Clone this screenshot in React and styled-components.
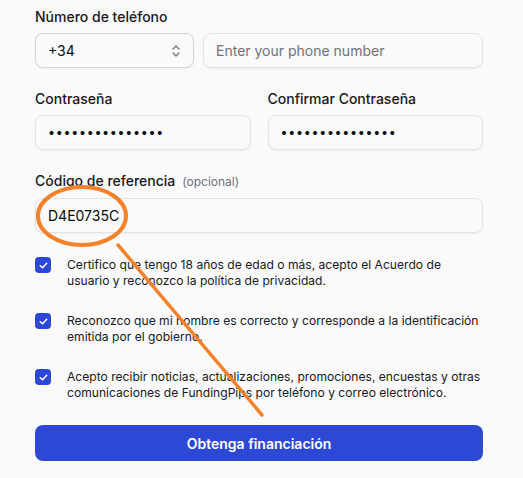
import React from 'react';
import styled, { createGlobalStyle } from 'styled-components';

const GlobalStyle = createGlobalStyle`
  html, body {
    margin: 0;
    padding: 0;
    background: #fafafa;
  }
  body {
    font-family: Inter, "Noto Sans", sans-serif;
    color: #18181b;
  }
`;

const Page = styled.div`
  position: relative;
  width: 523px;
  height: 478px;
  overflow: hidden;
  background: #fafafa;
`;

const Form = styled.form`
  display: flex;
  flex-direction: column;
  gap: 21px;
  width: 448px;
  padding: 7px 0 0 35px;
`;

const Field = styled.div`
  display: flex;
  flex-direction: column;
  gap: 6px;
  min-width: 0;
`;

const Row = styled.div`
  display: grid;
  grid-template-columns: ${({ $cols }) => $cols || '1fr 1fr'};
  gap: ${({ $gap }) => $gap || '17px'};
`;

const Label = styled.label`
  font-size: 14px;
  line-height: 20px;
  font-weight: 500;
  color: #18181b;
`;

const Hint = styled.span`
  font-size: 12px;
  font-weight: 400;
  color: #71717a;
  margin-left: 7px;
`;

const Input = styled.div`
  height: 35px;
  box-sizing: border-box;
  border: 1px solid ${({ $strong }) => ($strong ? '#d4d4d8' : '#e4e4e7')};
  border-radius: 8px;
  background: #fafafa;
  display: flex;
  align-items: center;
  justify-content: space-between;
  padding: 0 12px;
  font-size: ${({ $dots }) => ($dots ? '12.5px' : '14px')};
  letter-spacing: ${({ $dots }) => ($dots ? '0.7px' : '0')};
  color: ${({ $placeholder }) => ($placeholder ? '#71717a' : '#09090b')};
  box-shadow: 0 1px 2px rgba(0, 0, 0, 0.05);
`;

const Checks = styled.div`
  display: flex;
  flex-direction: column;
  gap: 24px;
  margin-top: 3px;
`;

const CheckRow = styled.div`
  display: flex;
  gap: 16px;
  align-items: flex-start;
`;

const Box = styled.span`
  flex: none;
  width: 16px;
  height: 16px;
  border-radius: 4px;
  background: #2e48d6;
  display: flex;
  align-items: center;
  justify-content: center;
`;

const CheckText = styled.p`
  margin: 0;
  font-size: 12.1px;
  line-height: 16px;
  color: #18181b;
`;

const Button = styled.button`
  margin-top: 3px;
  height: 36px;
  border: none;
  border-radius: 8px;
  background: #2e48d6;
  color: #fff;
  font-family: Inter, "Noto Sans", sans-serif;
  font-size: 14px;
  font-weight: 600;
`;

const Annotation = styled.svg`
  position: absolute;
  left: 0;
  top: 0;
  pointer-events: none;
`;

const Sort = () => (
  <svg width="10" height="14" viewBox="0 0 10 14" fill="none" stroke="#71717a" strokeWidth="1.3" strokeLinecap="round" strokeLinejoin="round">
    <path d="M2 5 5 2 8 5" />
    <path d="M2 9 5 12 8 9" />
  </svg>
);

const Tick = () => (
  <svg width="11" height="11" viewBox="0 0 12 12" fill="none" stroke="#fff" strokeWidth="1.6" strokeLinecap="round" strokeLinejoin="round">
    <path d="M2.5 6.2 5 8.5 9.5 3.5" />
  </svg>
);

const consents = [
  'Certifico que tengo 18 años de edad o más, acepto el Acuerdo de usuario y reconozco la política de privacidad.',
  'Reconozco que mi nombre es correcto y corresponde a la identificación emitida por el gobierno.',
  'Acepto recibir noticias, actualizaciones, promociones, encuestas y otras comunicaciones de FundingPips por teléfono y correo electrónico.',
];

const App = () => (
  <Page>
    <GlobalStyle />
    <Form onSubmit={(e) => e.preventDefault()}>
      <Field>
        <Label>Número de teléfono</Label>
        <Row $cols="159px 1fr" $gap="9px">
          <Input $strong>
            +34
            <Sort />
          </Input>
          <Input $placeholder>Enter your phone number</Input>
        </Row>
      </Field>
      <Row>
        <Field>
          <Label>Contraseña</Label>
          <Input $dots>•••••••••••••••</Input>
        </Field>
        <Field>
          <Label>Confirmar Contraseña</Label>
          <Input $dots>•••••••••••••••</Input>
        </Field>
      </Row>
      <Field>
        <Label>
          Código de referencia<Hint>(opcional)</Hint>
        </Label>
        <Input>D4E0735C</Input>
      </Field>
      <Checks>
        {consents.map((text) => (
          <CheckRow key={text}>
            <Box>
              <Tick />
            </Box>
            <CheckText>{text}</CheckText>
          </CheckRow>
        ))}
      </Checks>
      <Button type="submit">Obtenga financiación</Button>
    </Form>
    <Annotation width="523" height="478" viewBox="0 0 523 478">
      <ellipse cx="82" cy="216" rx="44" ry="29" fill="none" stroke="#f5822a" strokeWidth="4" />
      <path d="M118 245 L262 415" stroke="#f5822a" strokeWidth="3.5" strokeLinecap="round" />
    </Annotation>
  </Page>
);

export default App;
